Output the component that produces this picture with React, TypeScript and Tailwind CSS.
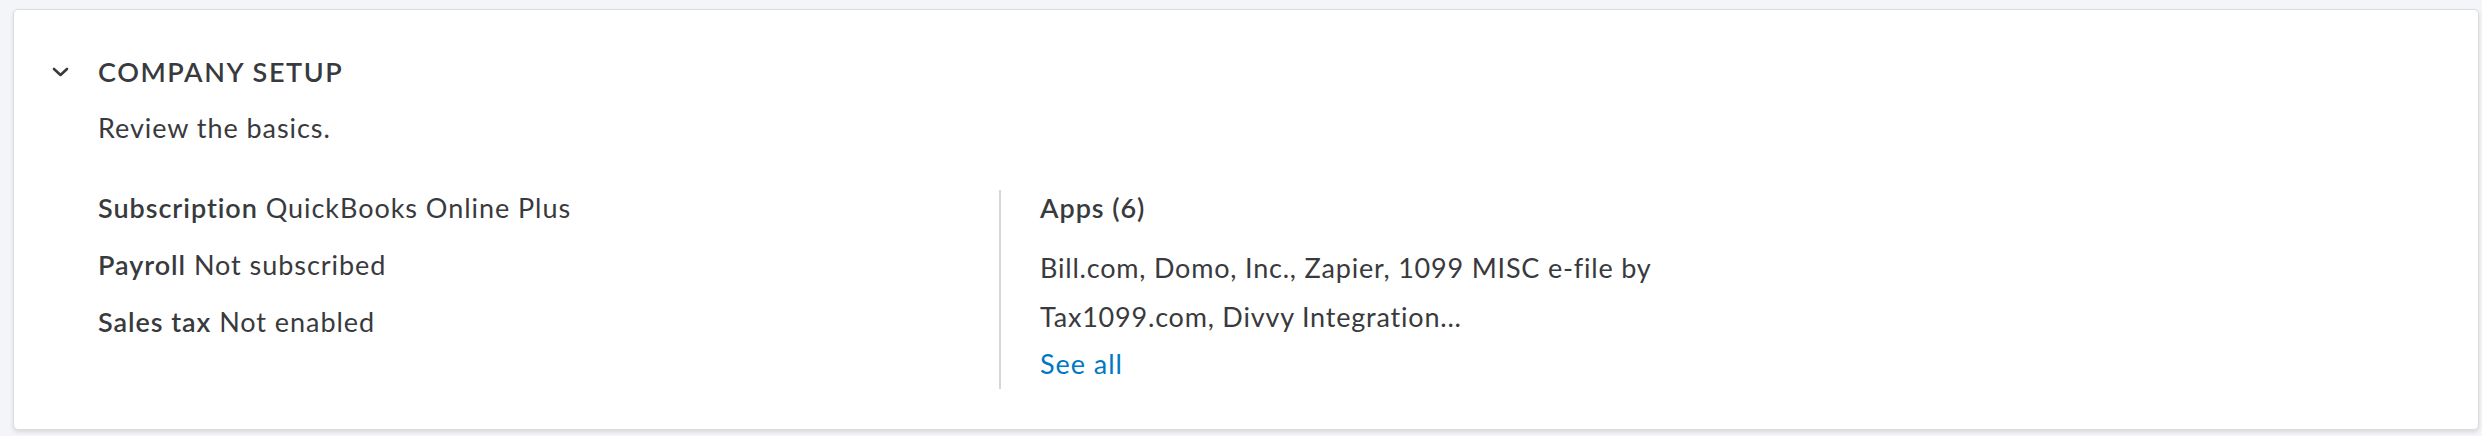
import React from "react";

export default function App() {
  const font = { fontFamily: "Lato, 'Noto Sans', sans-serif" };
  return (
    <div className="min-h-[436px] w-full bg-[#f4f5f8] pl-[13px] pr-[3px] pt-[9px] pb-[6px]" style={font}>
      <div className="rounded-[5px] border border-[#dcdde1] bg-white pl-[38px] pt-[44px] pb-[40px] shadow-[0_2px_4px_rgba(0,0,0,0.12)] text-[#393a3d]">
        <div className="flex items-center gap-[29px]">
          <svg width="17" height="10" viewBox="0 0 17 10" className="shrink-0">
            <polyline points="2,2 8.5,8 15,2" fill="none" stroke="#393a3d" strokeWidth="2.6" strokeLinecap="round" strokeLinejoin="round" />
          </svg>
          <h2 className="text-[27px] leading-[36px] font-semibold tracking-[1.6px]">COMPANY SETUP</h2>
        </div>
        <div className="pl-[46px] tracking-[0.95px]">
          <p className="mt-[20px] text-[27px] leading-[36px]">Review the basics.</p>
          <div className="mt-[44px] flex">
            <div className="w-[901px] flex flex-col gap-[21px] text-[27px] leading-[36px]">
              <div><span className="font-semibold">Subscription</span> QuickBooks Online Plus</div>
              <div><span className="font-semibold">Payroll</span> Not subscribed</div>
              <div><span className="font-semibold">Sales tax</span> Not enabled</div>
            </div>
            <div className="border-l-2 border-[#d4d7dc] pl-[39px] pb-[7px] w-[700px] text-[27px]">
              <div className="leading-[36px] font-semibold">Apps (6)</div>
              <p className="mt-[17px] leading-[49px] w-[640px] tracking-[0.8px]">Bill.com, Domo, Inc., Zapier, 1099 MISC e-file by Tax1099.com, Divvy Integration...</p>
              <a className="mt-[5px] block w-fit leading-[36px] text-[#0077c5]" href="#">See all</a>
            </div>
          </div>
        </div>
      </div>
    </div>
  );
}
